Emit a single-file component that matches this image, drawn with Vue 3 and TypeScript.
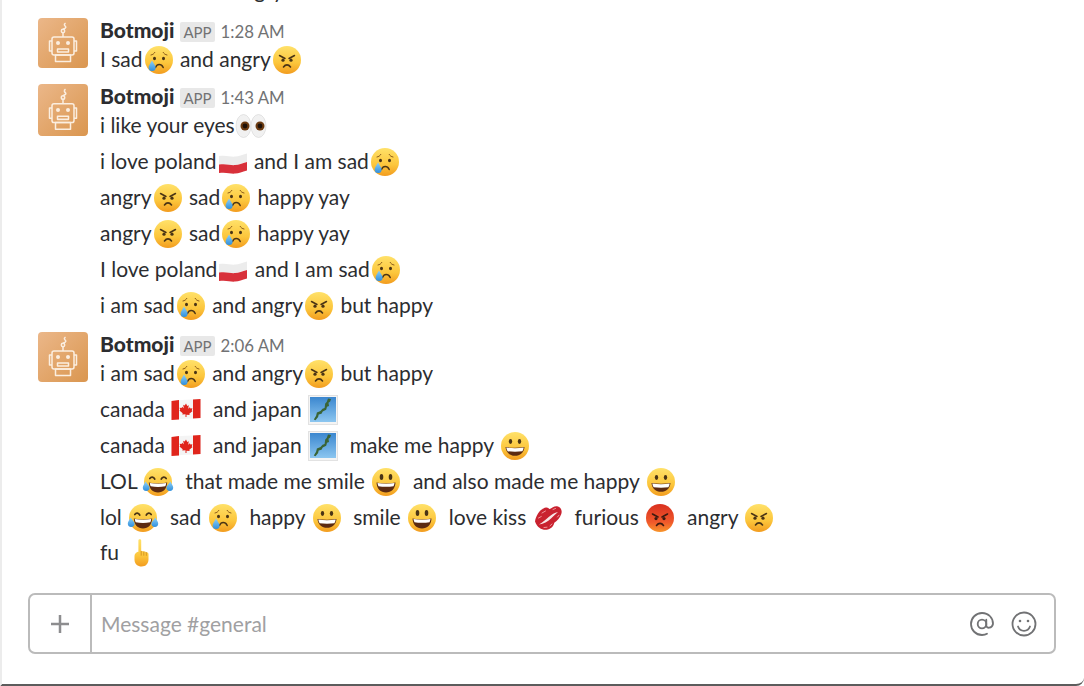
<script setup lang="ts">
interface Part {
  t?: string
  e?: string
}
interface Message {
  time: string
  lines: Part[][]
}

const sad = (): Part => ({ e: 'cry' })
const angry = (): Part => ({ e: 'angry' })

const messages: Message[] = [
  {
    time: '1:28 AM',
    lines: [[{ t: 'I sad' }, sad(), { t: ' and angry' }, angry()]],
  },
  {
    time: '1:43 AM',
    lines: [
      [{ t: 'i like your eyes' }, { e: 'eyes' }],
      [{ t: 'i love poland' }, { e: 'poland' }, { t: ' and I am sad' }, sad()],
      [{ t: 'angry' }, angry(), { t: ' sad' }, sad(), { t: ' happy yay' }],
      [{ t: 'angry' }, angry(), { t: ' sad' }, sad(), { t: ' happy yay' }],
      [{ t: 'I love poland' }, { e: 'poland' }, { t: ' and I am sad' }, sad()],
      [{ t: 'i am sad' }, sad(), { t: ' and angry' }, angry(), { t: ' but happy' }],
    ],
  },
  {
    time: '2:06 AM',
    lines: [
      [{ t: 'i am sad' }, sad(), { t: ' and angry' }, angry(), { t: ' but happy' }],
      [{ t: 'canada ' }, { e: 'canada' }, { t: '  and japan ' }, { e: 'japan' }],
      [{ t: 'canada ' }, { e: 'canada' }, { t: '  and japan ' }, { e: 'japan' }, { t: '  make me happy ' }, { e: 'grin' }],
      [{ t: 'LOL ' }, { e: 'joy' }, { t: '  that made me smile ' }, { e: 'smiley' }, { t: '  and also made me happy ' }, { e: 'grin' }],
      [{ t: 'lol ' }, { e: 'joy' }, { t: '  sad ' }, sad(), { t: '  happy ' }, { e: 'grin' }, { t: '  smile ' }, { e: 'smiley' }, { t: '  love kiss ' }, { e: 'kiss' }, { t: '  furious ' }, { e: 'rage' }, { t: '  angry ' }, angry()],
      [{ t: 'fu ' }, { e: 'fu' }],
    ],
  },
]
</script>

<template>
  <div class="window">
    <svg class="defs" width="0" height="0" aria-hidden="true">
      <defs>
        <linearGradient id="face" x1="0" y1="0" x2="0" y2="1">
          <stop offset="0" stop-color="#ffe169" />
          <stop offset="0.6" stop-color="#fcc63c" />
          <stop offset="1" stop-color="#f29c1f" />
        </linearGradient>
        <linearGradient id="red" x1="0" y1="0" x2="0" y2="1">
          <stop offset="0" stop-color="#d9301f" />
          <stop offset="0.65" stop-color="#f0592b" />
          <stop offset="1" stop-color="#f8962c" />
        </linearGradient>
        <linearGradient id="sky" x1="0" y1="0" x2="0" y2="1">
          <stop offset="0" stop-color="#3b87cf" />
          <stop offset="1" stop-color="#8cc6f0" />
        </linearGradient>
        <linearGradient id="drop" x1="0" y1="0" x2="0" y2="1">
          <stop offset="0" stop-color="#8fd0f5" />
          <stop offset="1" stop-color="#2f8fdd" />
        </linearGradient>
        <linearGradient id="bot" x1="0" y1="0" x2="1" y2="1">
          <stop offset="0" stop-color="#ebb789" />
          <stop offset="1" stop-color="#da964f" />
        </linearGradient>
      </defs>

      <symbol id="cry" viewBox="0 0 32 32">
        <circle cx="16" cy="16" r="14" fill="url(#face)" />
        <path d="M8 11c1.800-.3 3-1.200 3.800-2.600M24 11c-1.800-.3-3-1.200-3.800-2.600" fill="none" stroke="#8a5a1a" stroke-width="1" stroke-linecap="round" />
        <ellipse cx="11.500" cy="14.500" rx="1.500" ry="1.800" fill="#4a3415" />
        <ellipse cx="20.500" cy="14.500" rx="1.500" ry="1.800" fill="#4a3415" />
        <path d="M12.500 23.500c.9-2 2-2.900 3.700-2.900s3 .9 4 2.900" fill="none" stroke="#4a3415" stroke-width="1.500" stroke-linecap="round" />
        <path d="M9 16.500c-1.600 3-3.400 5-3.400 7a3.500 3.500 0 0 0 7 0c0-2-2-4-3.600-7z" fill="url(#drop)" />
      </symbol>

      <symbol id="angry" viewBox="0 0 32 32">
        <circle cx="16" cy="16" r="14" fill="url(#face)" />
        <path d="M8.500 11.500l5.500 3M23.500 11.500l-5.500 3" fill="none" stroke="#4a3415" stroke-width="1.500" stroke-linecap="round" />
        <circle cx="12" cy="16.200" r="1.600" fill="#4a3415" />
        <circle cx="20" cy="16.200" r="1.600" fill="#4a3415" />
        <path d="M12.500 23c1-1.400 2.100-2.100 3.500-2.100s2.500.7 3.500 2.100" fill="none" stroke="#4a3415" stroke-width="1.600" stroke-linecap="round" />
      </symbol>

      <symbol id="rage" viewBox="0 0 32 32">
        <circle cx="16" cy="16" r="14" fill="url(#red)" />
        <path d="M8.500 12l5.500 3M23.500 12l-5.500 3" fill="none" stroke="#3b1a10" stroke-width="1.600" stroke-linecap="round" />
        <circle cx="12" cy="16.600" r="1.600" fill="#3b1a10" />
        <circle cx="20" cy="16.600" r="1.600" fill="#3b1a10" />
        <path d="M12.500 23.500c1-1.400 2.100-2.100 3.500-2.100s2.500.7 3.500 2.100" fill="none" stroke="#3b1a10" stroke-width="1.600" stroke-linecap="round" />
      </symbol>

      <symbol id="eyes" viewBox="0 0 32 32">
        <ellipse cx="8.500" cy="16" rx="7.500" ry="11.500" fill="#f1f1f1" stroke="#d5d5d5" stroke-width="0.600" />
        <ellipse cx="23.500" cy="16" rx="7.500" ry="11.500" fill="#f1f1f1" stroke="#d5d5d5" stroke-width="0.600" />
        <circle cx="10" cy="16" r="4.500" fill="#6b3a10" />
        <circle cx="25" cy="16" r="4.500" fill="#6b3a10" />
        <circle cx="10" cy="16" r="2.400" fill="#1d1008" />
        <circle cx="25" cy="16" r="2.400" fill="#1d1008" />
      </symbol>

      <symbol id="poland" viewBox="0 0 32 32">
        <path d="M2 10c8-1 11 1 16 .6 4-.3 7-1.800 12-3.100v8.500C25 17.300 22 18.800 18 19.100 13 19.500 10 17.500 2 18.500z" fill="#ececec" />
        <path d="M2 18.500c8-1 11 1 16 .6 4-.3 7-1.800 12-3.100v8.500c-5 1.300-8 2.800-12 3.100-5 .4-8-1.600-16-.6z" fill="#d8303a" />
      </symbol>

      <symbol id="canada" viewBox="0 0 32 32">
        <path d="M1.500 7c9-1.500 19-1 29-2v19c-10 1-20 .5-29 2z" fill="#f4f4f4" />
        <path d="M1.500 7c2.500-.4 5-.7 7.500-.9v19.300c-2.500.2-5 .5-7.500.6z" fill="#e0251c" />
        <path d="M23 5.500c2.500-.1 5-.3 7.500-.5v19c-2.500.2-5 .4-7.500.5z" fill="#e0251c" />
        <path d="M16 9.500l1.300 2.500 1.500-.7-.6 3.500 1.700-1.600.5 1.300 2-.3-.6 2.300.8.500-3.300 2.800.4 1.300-3.200-.4V23h-1v-2.800l-3.200.4.400-1.300-3.300-2.800.8-.5-.6-2.300 2 .3.500-1.300 1.700 1.600-.6-3.500 1.500.7z" fill="#e0251c" />
      </symbol>

      <symbol id="japan" viewBox="0 0 32 32">
        <rect x="1.500" y="1.500" width="29" height="29" fill="#f4f4f4" stroke="#e2e2e2" />
        <rect x="3" y="3" width="26" height="25" fill="url(#sky)" />
        <path d="M21 4.500l3 .5-.8 2.500-1.700 1.200.5 3.300-2 .8-.8 3-3.500 1.700-1.200 2.300-2.800.7-.6 2.500-2.600 3.300-1.700-.9 2.300-3.600.8-3.300 3.600-1.600 2-2.200 2.100-.8.600-4.400 1.500-1.600z" fill="#3a6436" />
      </symbol>

      <symbol id="joy" viewBox="0 0 32 32">
        <circle cx="16" cy="16" r="14" fill="url(#face)" />
        <path d="M7.800 12.500c1.200-2 3.800-2 5 .6M24.200 12.500c-1.200-2-3.800-2-5 .6" fill="none" stroke="#4a3415" stroke-width="1.700" stroke-linecap="round" />
        <path d="M6.800 16.500c6 1.300 12.400 1.300 18.400 0-.3 6.500-4 10-9.200 10s-8.900-3.500-9.200-10z" fill="#5c2b12" />
        <path d="M7.800 17c5.500 1 11 1 16.400 0-.2 1.500-.5 2.500-1 3.300-4.500.8-9.900.8-14.400 0-.5-.8-.8-1.800-1-3.300z" fill="#fff" />
        <path d="M3.500 15.500c-1 2.300-2.700 4.300-2.700 6.100a3.400 3.400 0 0 0 6.800 0c0-1.800-2.700-4-4.100-6.100zM28.500 15.500c1 2.300 2.700 4.300 2.700 6.100a3.400 3.400 0 0 1-6.800 0c0-1.800 2.700-4 4.100-6.100z" fill="url(#drop)" />
      </symbol>

      <symbol id="smiley" viewBox="0 0 32 32">
        <circle cx="16" cy="16" r="14" fill="url(#face)" />
        <ellipse cx="11.500" cy="11" rx="1.800" ry="3" fill="#4a3415" />
        <ellipse cx="20.500" cy="11" rx="1.800" ry="3" fill="#4a3415" />
        <path d="M6.500 16.500c6 1.300 13 1.300 19 0-.3 6.500-4.200 10-9.500 10s-9.200-3.500-9.500-10z" fill="#5c2b12" />
        <path d="M7.500 17c5.500 1 11.500 1 17 0-.2 1.300-.5 2.300-1 3.200-4.700.8-10.300.8-15 0-.5-.9-.8-1.900-1-3.200z" fill="#fff" />
      </symbol>

      <symbol id="grin" viewBox="0 0 32 32">
        <circle cx="16" cy="16" r="14" fill="url(#face)" />
        <ellipse cx="11.500" cy="11.500" rx="1.700" ry="2.400" fill="#4a3415" />
        <ellipse cx="20.500" cy="11.500" rx="1.700" ry="2.400" fill="#4a3415" />
        <path d="M6.500 17c6 1.100 13 1.100 19 0-.5 5.500-4.400 8.800-9.500 8.800S7 22.500 6.500 17z" fill="#5c2b12" />
        <path d="M7.300 17.500c5.600.9 11.800.9 17.400 0-.2 1.500-.6 2.700-1.300 3.700-4.600.6-10.200.6-14.800 0-.7-1-1.100-2.200-1.300-3.700z" fill="#fff" />
      </symbol>

      <symbol id="kiss" viewBox="0 0 32 32">
        <path d="M3 19.500C4 13 8.500 6.500 14 5.500c1.900-.3 2.600 1 3.700 1.600 2.500-1.300 5-3.600 8.200-2.600 3 1 4.500 4.200 3.400 7.500-1.300 4-4.400 6.800-7 8.800-.6 3.600-3.800 6.600-7.800 7-4.700.4-9.200-2-11.500-8.300z" fill="#c9222f" />
        <path d="M7 22.500c3.800-2.400 7-5.300 10-7.800 2.700-2.200 5.500-3.800 9-4.700-2.500 2.300-4.800 4.300-7 6.400-3.400 3.200-7.300 5.400-12 6.100z" fill="#f8e6e6" />
        <path d="M10 11l3.500-2M6.500 16l2.800-1.500M21 7.500l2.500-1M25.500 15l1.500-1.800M12 25.500l3-.3M20 22l-2 1.800" stroke="#f2a0a6" stroke-width="0.900" stroke-linecap="round" fill="none" />
      </symbol>

      <symbol id="fu" viewBox="0 0 32 32">
        <path d="M14.400 3.500c0-1.600 2.800-1.600 2.800 0v10.800c1-.5 2-.3 2.600.4 1-.4 2-.1 2.500.7 1.300-.2 2.200.8 2.200 2.100v5c0 4.200-2.800 7-6.800 7s-7.200-2.600-7.200-6.800v-3.500c0-1.800.8-3 2-3.800.5-.4 1.200-.6 1.900-.5z" fill="url(#face)" />
        <path d="M17.200 14.300v4M19.800 14.700v3.600M22.300 15.400v3" stroke="#c97f12" stroke-width="0.700" stroke-linecap="round" fill="none" />
      </symbol>
    </svg>

    <div class="messages">
      <div class="cutoff">angry</div>
      <div v-for="msg in messages" :key="msg.time" class="message">
        <div class="avatar">
          <svg viewBox="0 0 50 50" width="50" height="50" preserveAspectRatio="none">
            <rect width="50" height="50" rx="4" fill="url(#bot)" />
            <g fill="none" stroke="#fbeee0" stroke-width="1.500" stroke-linejoin="round">
              <path d="M27.500 5c-2 1.500-1 2.500 0 3.500s-.5 2-2.500 2.700" />
              <circle cx="25" cy="13" r="1.700" />
              <path d="M25 14.700V19" />
              <rect x="14" y="19" width="22" height="18" rx="2" />
              <path d="M14 23h-2.500v10H14M36 23h2.500v10H36" />
              <rect x="17.500" y="37" width="15" height="6.500" />
              <rect x="19.500" y="31" width="11" height="3" />
            </g>
            <circle cx="20" cy="25" r="2" fill="#fbeee0" />
            <circle cx="30" cy="25" r="2" fill="#fbeee0" />
          </svg>
        </div>
        <div class="body">
          <div class="head">
            <span class="name">Botmoji</span>
            <span class="badge">APP</span>
            <span class="time">{{ msg.time }}</span>
          </div>
          <div v-for="(line, i) in msg.lines" :key="i" class="line">
            <template v-for="(part, j) in line" :key="j">
              <span v-if="part.t">{{ part.t }}</span>
              <svg v-else class="emoji" viewBox="0 0 32 32"><use :href="'#' + part.e" /></svg>
            </template>
          </div>
        </div>
      </div>
    </div>

    <div class="composer">
      <div class="plus">
        <svg viewBox="0 0 20 20" width="20" height="20">
          <path d="M10 1v18M1 10h18" stroke="#8d8d8f" stroke-width="2.500" fill="none" />
        </svg>
      </div>
      <div class="placeholder">Message #general</div>
      <div class="tools">
        <svg viewBox="0 0 26 26" width="26" height="26" fill="none" stroke="#717274" stroke-width="1.800" stroke-linecap="round">
          <circle cx="13" cy="13" r="4.300" />
          <path d="M17.300 8.700v5.800c0 3.200 5.700 3.200 6.700-1.500.1-6-4.300-11-11-11C6.800 2 2 7 2 13s4.800 11 11 11c2 0 3.700-.4 5-1.200" />
        </svg>
        <svg viewBox="0 0 26 26" width="26" height="26" fill="none" stroke="#717274" stroke-width="1.800" stroke-linecap="round">
          <circle cx="13" cy="13" r="11.500" />
          <path d="M7 15.500c1 2.800 3.300 4.300 6 4.300s5-1.500 6-4.300" />
          <circle cx="9" cy="10" r="1.300" fill="#717274" stroke="none" />
          <circle cx="17" cy="10" r="1.300" fill="#717274" stroke="none" />
        </svg>
      </div>
    </div>
  </div>
</template>

<style>
html,
body {
  margin: 0;
  background: #fff;
}
</style>

<style scoped>
.window {
  position: relative;
  box-sizing: border-box;
  width: 1084px;
  height: 686px;
  display: flex;
  flex-direction: column;
  overflow: hidden;
  background: #fff;
  border-left: 2px solid #ececec;
  border-bottom: 2px solid #5c5c5c;
  border-bottom-right-radius: 8px;
  font-family: Lato, "Liberation Sans", sans-serif;
  font-size: 21px;
  color: #2c2d30;
}

.defs {
  position: absolute;
}

.messages {
  height: 577px;
  flex: none;
  box-sizing: border-box;
  padding: 0 0 9px 36px;
  display: flex;
  flex-direction: column;
  justify-content: flex-end;
  gap: 9px;
  overflow: hidden;
}

.cutoff {
  padding-left: 194px;
  line-height: 36px;
  flex: none;
  margin-bottom: 1px;
}

.message {
  display: flex;
  flex: none;
  gap: 12px;
}

.cutoff + .message {
  margin-bottom: -2px;
}

.avatar {
  width: 50px;
  height: 50px;
  flex: none;
}

.avatar svg {
  display: block;
}

.cutoff + .message + .message .avatar svg {
  height: 52px;
}

.body {
  min-width: 0;
}

.head {
  display: flex;
  align-items: baseline;
  height: 23px;
  line-height: 23px;
}

.name {
  font-weight: 900;
}

.badge {
  margin-left: 6px;
  padding: 0 3px;
  height: 20px;
  line-height: 21px;
  font-size: 15px;
  color: #717274;
  background: #e8e8e8;
  border-radius: 2px;
}

.time {
  margin-left: 6px;
  font-size: 16.800px;
  color: #717274;
}

.line {
  height: 36px;
  line-height: 36px;
  white-space: pre;
}

.message:last-child .line:last-child {
  height: 33px;
  line-height: 33px;
}

.emoji {
  width: 32px;
  height: 32px;
  vertical-align: -9px;
}

.composer {
  box-sizing: border-box;
  flex: none;
  margin: 16px 0 0 26px;
  width: 1028px;
  height: 61px;
  display: flex;
  align-items: center;
  border: 2px solid #bbbbbb;
  border-radius: 7px;
}

.plus {
  box-sizing: border-box;
  width: 62px;
  height: 100%;
  flex: none;
  display: flex;
  align-items: center;
  justify-content: center;
  border-right: 2px solid #bbbbbb;
}

.placeholder {
  flex: 1;
  padding-left: 9px;
  color: #a0a0a2;
}

.tools {
  display: flex;
  gap: 16px;
  padding-right: 17px;
}
</style>
